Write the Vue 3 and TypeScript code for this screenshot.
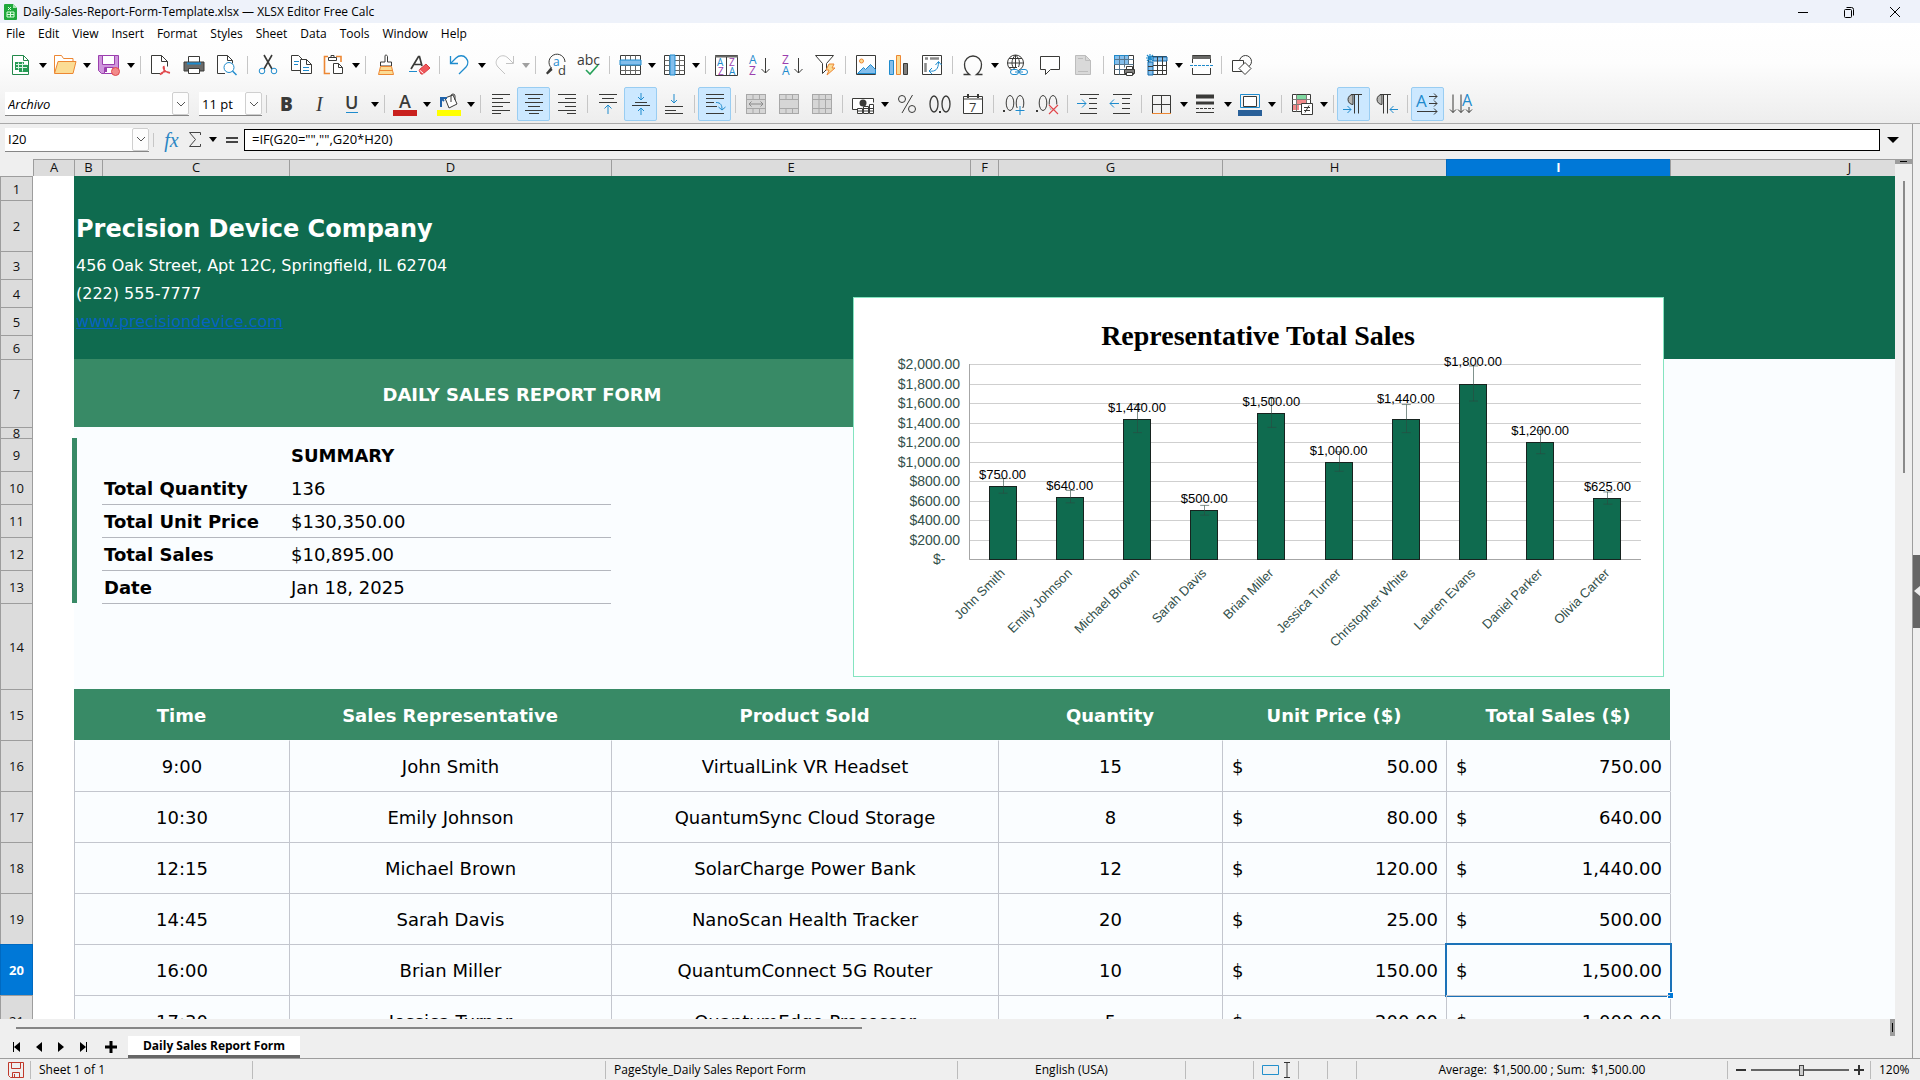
<script setup lang="ts">
import { ref } from 'vue'

interface Tool {
  id: string
  label: string
  menu?: boolean
  active?: boolean
  disabled?: boolean
}

const K = '#3a3a38'
const B = '#1e8bcd'
const P = '#9b3fae'
const O = '#ed8733'
const G = '#a8a8a8'

const lines = (rows: number[][], color = K) =>
  rows.map(([x, y, w]) => `<path d="M${x} ${y}.5h${w}" stroke="${color}"/>`).join('')

const mergeBase = `<rect x="2.500" y="2.500" width="19" height="19" fill="#d6d6d6" stroke="${G}"/><path d="M2.500 7.500h19M2.500 16.500h19M9 2.500v5M15.500 2.500v5M9 16.500v5M15.500 16.500v5" stroke="${G}"/>`
const down = (x: number, y1: number, y2: number, c = K, s = 4) =>
  `<path d="M${x} ${y1}V${y2}M${x - s} ${y2 - s}l${s} ${s} ${s}-${s}" stroke="${c}"/>`
const letter = (x: number, y: number, size: number, text: string, fill = K, extra = '') =>
  `<text x="${x}" y="${y}" font-size="${size}" fill="${fill}" stroke="none" font-family="'Open Sans', sans-serif" ${extra}>${text}</text>`

const icons: Record<string, string> = {
  new: `<path d="M3.500 2.500h11l5 5v14h-16z" fill="#fff" stroke="#23894b"/><path d="M14.500 2.500v5h5" stroke="#23894b"/><path d="M6 9h9v3h4v7H10v-2H6z" fill="#259c54"/><path d="M7 11.500h11M7 14.500h11M9.500 9.500v7M13.500 9.500v9" stroke="#d9f2e3"/>`,
  open: `<path d="M1.500 20V2.500h7l2 3h9.500v4" stroke="${O}" fill="#fff"/><path d="M1.500 20.500L5 8.500h18l-3 12z" fill="#fbdc95" stroke="${O}"/>`,
  save: `<path d="M1.500 2.500h20v18h-17l-3-3z" fill="#cf96dc" stroke="${P}"/><path d="M5.500 2.500h12v9h-12z" fill="#fff" stroke="${P}"/><path d="M7.500 14.500h9v6h-9z" fill="#fff" stroke="${P}"/><path d="M9 15v4" stroke="${P}" stroke-width="2"/><circle cx="18.500" cy="18.500" r="4" fill="#f28a8a" stroke="#e0484c"/>`,
  pdf: `<path d="M11 20.500H2.500v-18h10l6 6v5" stroke="${K}" fill="#fff"/><path d="M12.500 2.500v6h6" stroke="${K}"/><path d="M11 21.500c4-1 5-5 4-8-2 0 0 6 6 6.500M11 21.500c2-3 6-3.500 10-2" stroke="#e0484c" stroke-width="1.300"/>`,
  print: `<path d="M6.500 10V3.500h11V10" fill="#fff" stroke="${K}"/><path d="M2 9h20v9H2z" fill="#6b6b69" stroke="${K}"/><path d="M5 9.500h14v2H5z" fill="${B}"/><path d="M6.500 15.500h11v5h-11z" fill="#fff" stroke="${K}"/>`,
  preview: `<path d="M10 20.500H2.500v-18h10l5 5v3" stroke="${K}" fill="#fff"/><path d="M12.500 2.500v5h5" stroke="${K}"/><circle cx="14" cy="14.500" r="5" fill="#fff" stroke="${B}"/><path d="M17.500 18l4 4" stroke="${B}" stroke-width="1.500"/>`,
  cut: `<path d="M8 2l8 14M16 2L8 16" stroke="${K}" stroke-width="1.600"/><circle cx="6" cy="18" r="2.800" stroke="${B}"/><circle cx="18" cy="18" r="2.800" stroke="${B}"/>`,
  copy: `<path d="M11 17.500H2.500v-15h7l4 4" fill="#fff" stroke="${K}"/><path d="M5 8.500h5M5 11.500h4" stroke="${B}"/><path d="M11.500 6.500h6l5 5v9h-11z" fill="#fff" stroke="${K}"/><path d="M17.500 6.500v5h5" stroke="${K}"/><path d="M14 14.500h6M14 17.500h6" stroke="${B}"/>`,
  paste: `<path d="M8 20.500H2.500v-17H6M14 3.500h5V9" stroke="${O}" stroke-width="1.600"/><path d="M6.500 4.500h8v3h-8zM9 4.500v-2h3v2" fill="#fff" stroke="${K}"/><path d="M11.500 10.500h5l4 4v6h-9z" fill="#fff" stroke="${K}"/><path d="M16.500 10.500v4h4" stroke="${K}"/>`,
  brush: `<path d="M11 2.500a1.500 1.500 0 0 1 2.500 1V9H17.500v4h-11V9H11z" fill="#fff" stroke="${K}"/><path d="M6.500 13.500h11l2 8h-15z" fill="#fbdc95" stroke="${O}"/><path d="M6 17.500h12" stroke="${O}"/>`,
  clear: `<path d="M4 16L11.500 3.500h1L15 13M7 11.500h7" stroke="${K}" stroke-width="1.700"/><path d="M2 18.500h8" stroke="${B}"/><path d="M12 17l7-6 4 4-7 6h-2z" fill="#f0585c" stroke="#d8383d"/><path d="M12.500 17l4 3.500" stroke="#fff"/>`,
  undo: `<path d="M2.500 3v7.500H10" stroke="${B}" stroke-width="1.300"/><path d="M3 10l5-5c3-3 7.500-3 10 0s2.500 6 0 9l-7 7" stroke="${B}" stroke-width="1.300"/>`,
  redo: `<path d="M21.500 3v7.500H14" stroke="#c3c3c3"/><path d="M21 10l-5-5c-3-3-7.500-3-10 0s-2.500 6 0 9l7 7" stroke="#c3c3c3"/>`,
  find: `<path d="M7.500 15A8 8 0 1 1 21 9" stroke="${K}"/><path d="M7 14l-5 6 1.500 1.500L8.500 17z" fill="${K}"/>${letter(9, 13, 12, 'a', B)}${letter(14, 22, 13, 'd')}`,
  spell: `${letter(0, 12, 14, 'abc')}<path d="M9 17l4 4 8-9" stroke="#27a15a" stroke-width="1.600"/>`,
  row: `<path d="M2.500 2.500h20v19h-20z" fill="#fff" stroke="${K}"/><path d="M2.500 17.500h20M7.500 2.500v19M12.500 2.500v19M17.500 2.500v19M2.500 12.500h20" stroke="#686866"/><path d="M2 7h21v5H2z" fill="#83beec" stroke="${B}"/>`,
  col: `<path d="M2.500 2.500h20v19h-20z" fill="#fff" stroke="${K}"/><path d="M2.500 7.500h20M2.500 12.500h20M2.500 17.500h20M7.500 2.500v19M17.500 2.500v19" stroke="#686866"/><path d="M8 2h5v20H8z" fill="#83beec" stroke="${B}"/>`,
  sort: `<path d="M1.500 2.500h22v20h-22z" fill="#fff" stroke="${K}"/><path d="M1 3.500h23" stroke="#686866" stroke-width="2"/><path d="M12.500 4v18" stroke="${K}"/>${letter(3, 13, 10, 'A', B)}${letter(15, 13, 10, 'Z', P)}${letter(4, 22, 10, 'Z', P)}${letter(15, 22, 10, 'A', B)}`,
  asc: `${letter(2, 11, 12, 'A', B)}${letter(2, 22, 12, 'Z', P)}${down(18.5, 5, 20)}`,
  desc: `${letter(2, 11, 12, 'Z', P)}${letter(2, 22, 12, 'A', B)}${down(18.5, 5, 20)}`,
  filter: `<path d="M2.500 2.500h18l-7 8v6l-4 4v-10z" fill="#fff" stroke="${K}"/><path d="M16 11h5l-2 4h3l-8 7 2-5h-3z" fill="#fbdc95" stroke="${O}"/>`,
  image: `<path d="M2.500 2.500h19v19h-19z" fill="#fff" stroke="${K}"/><circle cx="7.500" cy="8" r="2" fill="#fbdc95" stroke="${O}"/><path d="M3.500 20.500l6-6 2 2 5-5 5 5v4z" fill="#83beec" stroke="${B}"/>`,
  chart: `<path d="M2.500 7.500h4v14h-4z" fill="#83beec" stroke="${B}"/><path d="M9.500 2.500h4v19h-4z" fill="#fbdc95" stroke="${O}"/><path d="M16.500 10.500h4v11h-4z" fill="#807f7d" stroke="${K}"/>`,
  pivot: `<path d="M2.500 2.500h19v19h-19z" fill="#fff" stroke="${K}"/><path d="M5 5.500h3M10 5.500h9M5.500 10v9" stroke="#888" stroke-width="2.500"/><path d="M9.500 18c6 1 9-2 9-9M12 15l-3 3 3 3M15.500 12l3-3.500 3 3.500" stroke="${B}"/>`,
  omega: `<path d="M2.500 21.500h6c-4-3-5-6-5-10a8.500 8.500 0 0 1 17 0c0 4-1 7-5 10h6" stroke="${K}" stroke-width="1.300"/>`,
  link: `<circle cx="10.500" cy="10" r="8" fill="#fff" stroke="${K}"/><path d="M2.500 10h16M4 5.500h13M4 14.500h8M10.500 2v13M10.500 2c-4.500 4-4.500 11-1 14M10.500 2c4.500 4 4.500 8 3 12" stroke="${K}"/><rect x="5.500" y="16.500" width="8" height="5" rx="2.500" fill="#fff" stroke="${B}"/><rect x="14.500" y="16.500" width="8" height="5" rx="2.500" fill="#fff" stroke="${B}"/><path d="M10 19h8" stroke="${B}"/>`,
  comment: `<path d="M2.500 3.500h19v13h-9l-5 5v-5h-5z" fill="#fff" stroke="${K}"/>`,
  headfoot: `<path d="M4.500 2.500h10l5 5v14h-15z" fill="#d9d9d9" stroke="#bdbdbd"/><path d="M14.500 2.500v5h5M7 5.500h5M7 18.500h10" stroke="#bdbdbd"/>`,
  area: `<path d="M2.500 2.500h19v19h-19z" fill="#fff" stroke="${K}"/><path d="M2.500 2.500h14v9h-14z" fill="#83beec" stroke="${B}"/><path d="M2.500 6.500h19M2.500 11.500h19M2.500 16.500h10M7.500 2.500v19M12.500 2.500v12M16.500 2.500v9" stroke="#55778f"/><path d="M12.500 16.500h10v4h-10z" fill="#807f7d" stroke="${K}"/><path d="M14.500 13.500h6v3h-6zM14.500 19.500h6v3h-6z" fill="#fff" stroke="${K}"/>`,
  freeze: `<path d="M3.500 3.500h18v18h-18z" fill="#fff" stroke="${K}"/><path d="M8 4h14v4H8zM3 9h5v13H3z" fill="#83beec" stroke="#0f66a8"/><path d="M8 12.500h14M8 17.500h14M12.500 4v18M17.500 4v18M3 13.500h5M3 17.500h5" stroke="${K}"/><path d="M5 1v8M1 5h8M2 2l6 6M8 2L2 8" stroke="${B}" stroke-width="1.200"/>`,
  split: `<path d="M3.500 10V2.500h18V10M3.500 15v6.500h18V15" fill="#fff" stroke="${K}"/><path d="M3 4.500h19" stroke="#686866" stroke-width="3"/><path d="M1 12.500h23" stroke="${B}" stroke-dasharray="3 1"/>`,
  shapes: `<circle cx="15.500" cy="8.500" r="6" stroke="${K}"/><path d="M2.500 7.500h11v11h-11z" fill="#fff" stroke="${K}"/><path d="M15 9.500l6 6-6 6-6-6z" fill="#fff" stroke="${K}"/>`,
  bold: letter(5, 19, 19, 'B', K, 'font-weight="800"'),
  italic: letter(8, 19, 20, 'I', K, `font-style="italic" style="font-family:'Liberation Serif',serif"`),
  underline: `${letter(4, 17, 18, 'U', K, 'font-weight="600"')}<path d="M5 20.500h12" stroke="${B}"/>`,
  fontcolor: `${letter(6, 16, 18, 'A', K, 'font-weight="600"')}<path d="M0 18h24v6H0z" fill="#c9211e"/>`,
  highlight: `<path d="M8 6l8-3 4 9-8 4zM14 10V4a2 2 0 0 1 4 0v4" fill="#fff" stroke="${K}"/><path d="M4 15V6h6M4 6l3 3" stroke="#1f62a8" stroke-width="2"/><path d="M0 18h24v6H0z" fill="#ff0"/>`,
  left: lines([[3, 2, 18], [3, 6, 11], [3, 10, 18], [3, 14, 11], [3, 18, 18], [3, 21, 9]]),
  center: lines([[3, 2, 18], [6, 6, 12], [3, 10, 18], [6, 14, 12], [3, 18, 18], [7, 21, 10]]),
  right: lines([[3, 2, 18], [10, 6, 11], [3, 10, 18], [10, 14, 11], [3, 18, 18], [12, 21, 9]]),
  top: `${lines([[3, 2, 18], [6, 6, 12], [3, 10, 18]])}<path d="M12 22V13M8.500 16.500L12 13l3.500 3.500" stroke="${B}"/>`,
  middle: `${lines([[6, 10, 12], [3, 13, 18]])}${down(12, 1, 8, B, 3)}<path d="M12 23v-7M9 19l3-3 3 3" stroke="${B}"/>`,
  bottom: `${down(12, 2, 11, B, 3)}${lines([[3, 14, 18], [3, 18, 11], [3, 21, 18]])}`,
  wrap: `${lines([[3, 2, 18], [3, 6, 18], [3, 10, 8], [3, 14, 11], [3, 21, 18]])}<path d="M13 10.500c5 0 6 3 6 7M15.500 15l3.500 3 3.500-3" stroke="${B}"/>`,
  merge: `${mergeBase}<path d="M5 12h14M7.500 9.500L5 12l2.500 2.500M16.500 9.500L19 12l-2.500 2.500" stroke="#8a8a8a"/>`,
  merge2: mergeBase,
  merge3: `${mergeBase}<path d="M9 7.500v9M15.500 7.500v9" stroke="${G}"/>`,
  currency: `<path d="M6 17.500H1.500v-11h21v4" fill="#fff" stroke="${K}"/><circle cx="12" cy="11" r="3.500" fill="${K}"/><path d="M6.500 16.500h5v5h-5zM12.500 14.500h5v7h-5zM18.500 12.500h4v9h-4z" fill="#fff" stroke="${K}"/><path d="M7 19h15M13 16.500h9" stroke="${K}"/>`,
  percent: `<circle cx="7" cy="7" r="3.500" stroke="${K}"/><circle cx="17" cy="17" r="3.500" stroke="${K}"/><path d="M17.500 3L7 21" stroke="${K}"/>`,
  number: `<ellipse cx="6" cy="12" rx="4" ry="8" stroke="${K}" stroke-width="1.300"/><ellipse cx="18" cy="12" rx="4" ry="8" stroke="${K}" stroke-width="1.300"/><path d="M11 19h2v2h-2z" fill="${K}"/>`,
  date: `<path d="M2.500 4.500h19v17h-19z" fill="#fff" stroke="${K}"/><path d="M2.500 7h19" stroke="${K}"/><path d="M7 2v4M17 2v4" stroke="${K}" stroke-width="2"/>${letter(8, 20, 13, '7')}`,
  adddec: `<path d="M1 18h2v2H1z" fill="${K}"/><ellipse cx="8" cy="11" rx="3.800" ry="7.500" stroke="${K}"/><ellipse cx="18" cy="11" rx="3.800" ry="7.500" stroke="${K}"/><path d="M18 13v10M13 18h10" stroke="#f5f5f5" stroke-width="4"/><path d="M18 14v9M13.500 18.500h9" stroke="${B}"/>`,
  deldec: `<path d="M1 18h2v2H1z" fill="${K}"/><ellipse cx="8" cy="11" rx="3.800" ry="7.500" stroke="${K}"/><ellipse cx="18" cy="11" rx="3.800" ry="7.500" stroke="${K}"/><path d="M14 13l9 9M23 13l-9 9" stroke="#f5f5f5" stroke-width="3"/><path d="M14 13l9 9M23 13l-9 9" stroke="#e0484c" stroke-width="1.200"/>`,
  indent: `${lines([[4, 2, 19], [13, 6, 8], [13, 11, 8], [13, 16, 8], [4, 21, 17]])}<path d="M1 11.500h9M6 7.500l4 4-4 4" stroke="${B}"/>`,
  outdent: `${lines([[4, 2, 19], [13, 6, 8], [13, 11, 8], [13, 16, 8], [4, 21, 17]])}<path d="M10 11.500H1M5 7.500l-4 4 4 4" stroke="${B}"/>`,
  borders: `<path d="M2.500 21.500v-18h18v18M11.500 3.500v18M2.500 12.500h18" stroke="${K}"/><path d="M2 21.500h19" stroke="${O}"/>`,
  linestyle: `<path d="M2 4.500h18" stroke="${K}" stroke-width="4"/><path d="M2 11h18" stroke="${K}" stroke-width="3"/><path d="M2 16.500h18" stroke="${K}" stroke-dasharray="3 1"/><path d="M2 20.500h18" stroke="${K}"/>`,
  linecolor: `<path d="M2.500 2.500h19v13h-19z" stroke="${B}"/><path d="M5.500 4.500h13v10h-13z" fill="#fff" stroke="${K}"/><path d="M0 18h24v6H0z" fill="#2a6099"/>`,
  conditional: `<path d="M2.500 2.500h18v17h-18z" fill="#fff" stroke="${K}"/><path d="M7 3h9v4H7z" fill="#7fd8a0"/><path d="M7 8h9v4H7zM3 12h6v6H3z" fill="#f28a8a"/><path d="M2.500 7.500h18M2.500 12.500h18M6.500 2.500v17M16.500 2.500v17" stroke="#7d7b78"/><path d="M11.500 11.500h11v11h-11z" fill="#fff" stroke="${K}"/><path d="M14 15.500h6M14 18.500h6M19 13.500l-4 7" stroke="${K}"/>`,
  ltr: `<path d="M11 12.500a5 5 0 0 1 0-10z" fill="#b5b5b3" stroke="${K}"/><path d="M9 2.500h11M12.500 2.500v19M16.500 2.500v19" stroke="${K}"/><path d="M1 17.500h8M5.500 14l3.500 3.500-3.500 3.500" stroke="${B}"/>`,
  rtl: `<path d="M7 12.500a5 5 0 0 1 0-10z" fill="#b5b5b3" stroke="${K}"/><path d="M5 2.500h11M8.500 2.500v19M12.500 2.500v19" stroke="${K}"/><path d="M23 17.500h-8M18.500 14L15 17.500l3.500 3.500" stroke="${B}"/>`,
  horizontal: `${letter(0, 15, 17, 'A', B)}<path d="M13 4.500h8M18 1.500l3 3-3 3M13 11.500h8M18 8.500l3 3-3 3M1 19.500h20M18 16.500l3 3-3 3" stroke="${K}"/>`,
  vertical: `${letter(13, 14, 16, 'A', B)}<path d="M4 2.500v18M1 17.500l3 3 3-3M12 2.500v18M9 17.500l3 3 3-3M20 15v5.500M17 17.500l3 3 3-3" stroke="${K}"/>`,
}

const standardBar: Tool[][] = [
  [{ id: 'new', label: 'New', menu: true }, { id: 'open', label: 'Open', menu: true }, { id: 'save', label: 'Save', menu: true }],
  [{ id: 'pdf', label: 'Export as PDF' }, { id: 'print', label: 'Print' }, { id: 'preview', label: 'Print Preview' }],
  [{ id: 'cut', label: 'Cut' }, { id: 'copy', label: 'Copy' }, { id: 'paste', label: 'Paste', menu: true }],
  [{ id: 'brush', label: 'Clone Formatting' }, { id: 'clear', label: 'Clear Formatting' }],
  [{ id: 'undo', label: 'Undo', menu: true }, { id: 'redo', label: 'Redo', menu: true, disabled: true }],
  [{ id: 'find', label: 'Find and Replace' }, { id: 'spell', label: 'Spelling' }],
  [{ id: 'row', label: 'Row', menu: true }, { id: 'col', label: 'Column', menu: true }],
  [{ id: 'sort', label: 'Sort' }, { id: 'asc', label: 'Sort Ascending' }, { id: 'desc', label: 'Sort Descending' }, { id: 'filter', label: 'AutoFilter' }],
  [{ id: 'image', label: 'Insert Image' }, { id: 'chart', label: 'Insert Chart' }, { id: 'pivot', label: 'Pivot Table' }],
  [{ id: 'omega', label: 'Special Character', menu: true }, { id: 'link', label: 'Hyperlink' }, { id: 'comment', label: 'Comment' }, { id: 'headfoot', label: 'Headers and Footers', disabled: true }],
  [{ id: 'area', label: 'Define Print Area' }, { id: 'freeze', label: 'Freeze Rows and Columns', menu: true }, { id: 'split', label: 'Split Window' }],
  [{ id: 'shapes', label: 'Draw Functions' }],
]

const formatBar: Tool[][] = [
  [{ id: 'bold', label: 'Bold' }, { id: 'italic', label: 'Italic' }, { id: 'underline', label: 'Underline', menu: true }],
  [{ id: 'fontcolor', label: 'Font Color', menu: true }, { id: 'highlight', label: 'Background Color', menu: true }],
  [{ id: 'left', label: 'Align Left' }, { id: 'center', label: 'Center Horizontally', active: true }, { id: 'right', label: 'Align Right' }],
  [{ id: 'top', label: 'Align Top' }, { id: 'middle', label: 'Center Vertically', active: true }, { id: 'bottom', label: 'Align Bottom' }],
  [{ id: 'wrap', label: 'Wrap Text', active: true }],
  [{ id: 'merge', label: 'Merge and Center', disabled: true }, { id: 'merge2', label: 'Merge Cells', disabled: true }, { id: 'merge3', label: 'Unmerge Cells', disabled: true }],
  [{ id: 'currency', label: 'Currency', menu: true }, { id: 'percent', label: 'Percent' }, { id: 'number', label: 'Number' }, { id: 'date', label: 'Date' }],
  [{ id: 'adddec', label: 'Add Decimal Place' }, { id: 'deldec', label: 'Delete Decimal Place' }],
  [{ id: 'indent', label: 'Increase Indent' }, { id: 'outdent', label: 'Decrease Indent' }],
  [{ id: 'borders', label: 'Borders', menu: true }, { id: 'linestyle', label: 'Border Style', menu: true }, { id: 'linecolor', label: 'Border Color', menu: true }],
  [{ id: 'conditional', label: 'Conditional Formatting', menu: true }],
  [{ id: 'ltr', label: 'Left-to-Right', active: true }, { id: 'rtl', label: 'Right-to-Left' }],
  [{ id: 'horizontal', label: 'Text Left to Right', active: true }, { id: 'vertical', label: 'Text Top to Bottom' }],
]

const menus = ['File', 'Edit', 'View', 'Insert', 'Format', 'Styles', 'Sheet', 'Data', 'Tools', 'Window', 'Help']
const columns = ['A', 'B', 'C', 'D', 'E', 'F', 'G', 'H', 'I', 'J']

const summary = [
  { row: 10, label: 'Total Quantity', value: '136' },
  { row: 11, label: 'Total Unit Price', value: '$130,350.00' },
  { row: 12, label: 'Total Sales', value: '$10,895.00' },
  { row: 13, label: 'Date', value: 'Jan 18, 2025' },
]

const sales = [
  { row: 16, time: '9:00', rep: 'John Smith', product: 'VirtualLink VR Headset', qty: 15, price: '50.00', total: '750.00' },
  { row: 17, time: '10:30', rep: 'Emily Johnson', product: 'QuantumSync Cloud Storage', qty: 8, price: '80.00', total: '640.00' },
  { row: 18, time: '12:15', rep: 'Michael Brown', product: 'SolarCharge Power Bank', qty: 12, price: '120.00', total: '1,440.00' },
  { row: 19, time: '14:45', rep: 'Sarah Davis', product: 'NanoScan Health Tracker', qty: 20, price: '25.00', total: '500.00' },
  { row: 20, time: '16:00', rep: 'Brian Miller', product: 'QuantumConnect 5G Router', qty: 10, price: '150.00', total: '1,500.00' },
  { row: 21, time: '17:30', rep: 'Jessica Turner', product: 'QuantumEdge Processor', qty: 5, price: '200.00', total: '1,000.00' },
]

const plot = { left: 116, right: 788, top: 67, bottom: 262, max: 2000 }
const yOf = (v: number) => plot.bottom - (v / plot.max) * (plot.bottom - plot.top)
const money = (v: number) => '$' + v.toLocaleString('en-US', { minimumFractionDigits: 2 })
const ticks = Array.from({ length: 11 }, (_, i) => 2000 - i * 200)

const people: [string, number, number][] = [
  ['John Smith', 750, 7],
  ['Emily Johnson', 640, 7],
  ['Michael Brown', 1440, 7],
  ['Sarah Davis', 500, 7],
  ['Brian Miller', 1500, 7],
  ['Jessica Turner', 1000, 7],
  ['Christopher White', 1440, 16],
  ['Lauren Evans', 1800, 18],
  ['Daniel Parker', 1200, 7],
  ['Olivia Carter', 625, 7],
]
const step = (plot.right - plot.left) / people.length
const bars = people.map(([name, value, lift], i) => ({
  name,
  value,
  x: plot.left + step * (i + 0.5),
  y: yOf(value),
  labelY: yOf(value) - lift,
  high: yOf(value * 1.1),
  low: yOf(value * 0.9),
}))

const cellName = ref('I20')
const formula = ref('=IF(G20="","",G20*H20)')
const zoom = ref(52)
</script>

<template>
  <div class="app">
    <header class="titlebar">
      <svg class="logo" viewBox="0 0 13 16" aria-hidden="true">
        <path d="M1 0h8l4 4v11a1 1 0 0 1-1 1H1a1 1 0 0 1-1-1V1a1 1 0 0 1 1-1z" fill="#1fa83c" />
        <path d="M9 0l4 4H9z" fill="#a9e5b4" />
        <path d="M3 8h7v5H3zM3 10.500h7M6.500 8v5M4 3l3 3M7 3L4 6" fill="none" stroke="#d9ffdf" />
      </svg>
      <h1>Daily-Sales-Report-Form-Template.xlsx — XLSX Editor Free Calc</h1>
      <div class="window-buttons">
        <button aria-label="Minimize"><svg viewBox="0 0 12 12"><path d="M1 6.500h10" /></svg></button>
        <button aria-label="Restore"><svg viewBox="0 0 12 12"><rect x="1.500" y="3.500" width="7" height="8" rx="1" /><path d="M3.500 1.500h5a2 2 0 0 1 2 2v6" /></svg></button>
        <button aria-label="Close"><svg viewBox="0 0 12 12"><path d="M1 1l10 10M11 1L1 11" /></svg></button>
      </div>
    </header>

    <div class="chrome">
      <nav class="menubar" aria-label="Main menu">
        <button v-for="m in menus" :key="m">{{ m }}</button>
      </nav>

      <div class="toolbar standard" role="toolbar" aria-label="Standard">
        <div v-for="(group, g) in standardBar" :key="g" class="group">
          <template v-for="t in group" :key="t.id">
            <button class="tool" :class="{ active: t.active }" :disabled="t.disabled" :aria-label="t.label">
              <svg viewBox="0 0 24 24" v-html="icons[t.id]"></svg>
            </button>
            <button v-if="t.menu" class="drop" :disabled="t.disabled" :aria-label="t.label + ' options'"></button>
          </template>
        </div>
      </div>

      <div class="toolbar formatting" role="toolbar" aria-label="Formatting">
        <div class="combo font-name">
          <select aria-label="Font Name"><option>Archivo</option></select>
          <span class="chevron"><svg viewBox="0 0 10 6"><path d="M1 1l4 4 4-4" /></svg></span>
        </div>
        <div class="combo font-size">
          <select aria-label="Font Size"><option>11 pt</option></select>
          <span class="chevron"><svg viewBox="0 0 10 6"><path d="M1 1l4 4 4-4" /></svg></span>
        </div>
        <span class="gap-rule"></span>
        <div v-for="(group, g) in formatBar" :key="g" class="group">
          <template v-for="t in group" :key="t.id">
            <button class="tool" :class="{ active: t.active }" :disabled="t.disabled" :aria-label="t.label">
              <svg viewBox="0 0 24 24" v-html="icons[t.id]"></svg>
            </button>
            <button v-if="t.menu" class="drop" :aria-label="t.label + ' options'"></button>
          </template>
        </div>
      </div>
    </div>

    <div class="workspace">
      <main class="document">
        <div class="formula-bar">
          <div class="combo name-box">
            <input v-model="cellName" aria-label="Name Box" />
            <button class="chevron" aria-label="Name Box list"><svg viewBox="0 0 10 6"><path d="M1 1l4 4 4-4" /></svg></button>
          </div>
          <span class="fx-rule"></span>
          <button class="fx" aria-label="Function Wizard">fx</button>
          <button class="sigma" aria-label="Select Function"><svg viewBox="0 0 14 18"><path d="M12.500 4V1.500h-11l6 7-6 7h11V13" /></svg></button>
          <button class="drop" aria-label="Function options"></button>
          <button class="equals" aria-label="Formula"></button>
          <input v-model="formula" class="formula" aria-label="Input line" />
          <button class="expand" aria-label="Expand Formula Bar"></button>
        </div>

        <div class="grid-area">
          <div class="sheet">
            <table>
              <colgroup>
                <col class="w-head" /><col class="w-a" /><col class="w-b" /><col class="w-c" /><col class="w-d" />
                <col class="w-e" /><col class="w-f" /><col class="w-g" /><col class="w-h" /><col class="w-i" /><col class="w-j" />
              </colgroup>
              <thead>
                <tr>
                  <th class="corner"></th>
                  <th v-for="c in columns" :key="c" scope="col" class="col-head" :class="{ current: c === 'I' }">{{ c }}</th>
                </tr>
              </thead>
              <tbody>
                <tr class="h-24"><th scope="row">1</th><td class="margin"></td><td colspan="9" class="banner"></td></tr>
                <tr class="h-51"><th scope="row">2</th><td class="margin"></td><td colspan="9" class="banner company">Precision Device Company</td></tr>
                <tr class="h-28"><th scope="row">3</th><td class="margin"></td><td colspan="9" class="banner contact">456 Oak Street, Apt 12C, Springfield, IL 62704</td></tr>
                <tr class="h-28"><th scope="row">4</th><td class="margin"></td><td colspan="9" class="banner contact">(222) 555-7777</td></tr>
                <tr class="h-28"><th scope="row">5</th><td class="margin"></td><td colspan="9" class="banner contact"><a href="#">www.precisiondevice.com</a></td></tr>
                <tr class="h-24"><th scope="row">6</th><td class="margin"></td><td colspan="9" class="banner"></td></tr>
                <tr class="h-68"><th scope="row">7</th><td class="margin"></td><td colspan="4" class="form-title">DAILY SALES REPORT FORM</td><td colspan="5"></td></tr>
                <tr class="h-11"><th scope="row">8</th><td class="margin"></td><td colspan="9"></td></tr>
                <tr class="h-33"><th scope="row">9</th><td class="margin bar-left"></td><td class="bar-right"></td><td></td><td class="bold value">SUMMARY</td><td colspan="6"></td></tr>
                <tr v-for="s in summary" :key="s.row" class="h-33">
                  <th scope="row">{{ s.row }}</th><td class="margin bar-left"></td><td class="bar-right"></td>
                  <td class="bold value" :class="{ ruled: s.row > 10 }">{{ s.label }}</td><td class="value" :class="{ ruled: s.row > 10 }">{{ s.value }}</td><td colspan="6"></td>
                </tr>
                <tr class="h-86"><th scope="row">14</th><td class="margin"></td><td></td><td colspan="2" class="ruled"></td><td colspan="6"></td></tr>
                <tr class="h-51 headings">
                  <th scope="row">15</th><td class="margin"></td><td colspan="2">Time</td><td>Sales Representative</td><td colspan="2">Product Sold</td><td>Quantity</td><td>Unit Price ($)</td><td>Total Sales ($)</td><td class="outside"></td>
                </tr>
                <tr v-for="s in sales" :key="s.row" class="h-51 entry" :class="{ first: s.row === 16 }">
                  <th scope="row" :class="{ current: s.row === 20 }">{{ s.row }}</th><td class="margin"></td>
                  <td colspan="2">{{ s.time }}</td><td>{{ s.rep }}</td><td colspan="2">{{ s.product }}</td><td>{{ s.qty }}</td>
                  <td><div class="amount"><span>$</span><span>{{ s.price }}</span></div></td>
                  <td class="total"><div class="amount"><span>$</span><span>{{ s.total }}</span></div><div v-if="s.row === 20" class="cursor"></div></td>
                  <td class="outside"></td>
                </tr>
              </tbody>
            </table>

            <figure class="chart">
              <svg viewBox="0 0 811 380" role="img" aria-label="Representative Total Sales">
                <text class="chart-title" x="405" y="48">Representative Total Sales</text>
                <g v-for="t in ticks" :key="t">
                  <line class="grid-line" :x1="plot.left" :x2="plot.right" :y1="Math.round(yOf(t)) + 0.5" :y2="Math.round(yOf(t)) + 0.5" />
                  <text v-if="t" class="tick" x="107" :y="yOf(t) + 5">{{ money(t) }}</text>
                  <text v-else class="tick zero" x="80" :y="yOf(t) + 5">$-</text>
                </g>
                <path class="axis" d="M116.500 67V262.500H788" />
                <g v-for="b in bars" :key="b.name">
                  <rect class="bar" :x="Math.round(b.x) - 13.5" :y="Math.round(b.y) + 0.5" width="27" :height="plot.bottom - Math.round(b.y)" />
                  <path class="error" :d="`M${Math.round(b.x) + 0.5} ${b.high}V${b.low}M${b.x - 4} ${b.high}h9M${b.x - 4} ${b.low}h9`" />
                  <text class="data-label" :x="b.x" :y="b.labelY">{{ money(b.value) }}</text>
                  <text class="category" :transform="`translate(${b.x + 3} 277) rotate(-45)`">{{ b.name }}</text>
                </g>
              </svg>
            </figure>
          </div>
          <div class="v-scroll"><span class="v-split"></span><span class="v-thumb"></span></div>
        </div>

        <div class="h-scroll"><span class="h-thumb"></span><span class="h-split"></span></div>

        <div class="tabs">
          <button aria-label="First sheet"><svg viewBox="0 0 12 12"><path d="M2.500 1v10" stroke="#000" /><path d="M9 1v10L3 6z" /></svg></button>
          <button aria-label="Previous sheet"><svg viewBox="0 0 12 12"><path d="M9 1v10L3 6z" /></svg></button>
          <button aria-label="Next sheet"><svg viewBox="0 0 12 12"><path d="M3 1v10l6-5z" /></svg></button>
          <button aria-label="Last sheet"><svg viewBox="0 0 12 12"><path d="M9.500 1v10" stroke="#000" /><path d="M3 1v10l6-5z" /></svg></button>
          <button class="add" aria-label="Add sheet"><svg viewBox="0 0 14 14"><path d="M7 1v12M1 7h12" stroke="#000" stroke-width="3" /></svg></button>
          <button class="tab">Daily Sales Report Form</button>
        </div>
      </main>
      <aside class="sidebar"><button aria-label="Show sidebar"><svg viewBox="0 0 6 10"><path d="M6 0v10L0 5z" fill="#eee" /></svg></button></aside>
    </div>

    <footer class="status">
      <div class="disk">
        <svg viewBox="0 0 16 16"><path d="M.5.5h15v15h-13l-2-2zM3.500.5v6h9v-6M4.500 15.500v-5h7v5M6.500 12v3" fill="none" stroke="#c0392b" /></svg>
      </div>
      <div class="sheet-count">Sheet 1 of 1</div>
      <div></div>
      <div class="page-style">PageStyle_Daily Sales Report Form</div>
      <div class="centered">English (USA)</div>
      <div></div>
      <div class="insert-mode">
        <svg viewBox="0 0 30 18"><path d="M.5 4.500h16v9H.5z" fill="none" stroke="#2490cc" /><path d="M22 1.500h6M25 1.500v15M22 16.500h6" fill="none" stroke="#333" /></svg>
      </div>
      <div></div>
      <div></div>
      <div class="centered totals">Average:&nbsp; $1,500.00 ; Sum:&nbsp; $1,500.00</div>
      <div class="zoom">
        <button aria-label="Zoom out"><svg viewBox="0 0 10 10"><path d="M0 5h10" stroke="#333" stroke-width="2" /></svg></button>
        <input v-model="zoom" type="range" min="0" max="100" aria-label="Zoom" />
        <button aria-label="Zoom in"><svg viewBox="0 0 10 10"><path d="M0 5h10M5 0v10" stroke="#333" stroke-width="2" /></svg></button>
      </div>
      <div class="percent">120%</div>
    </footer>
  </div>
</template>

<style>
body {
  margin: 0;
  overflow: hidden;
}
</style>

<style scoped>
.app {
  display: flex;
  flex-direction: column;
  height: 100vh;
  overflow: hidden;
  background: #efefef;
  color: #000;
  font: 13px/18px 'Open Sans', 'Noto Sans', sans-serif;
}
button,
input,
select {
  margin: 0;
  padding: 0;
  border: 0;
  background: none;
  color: inherit;
  font: inherit;
}
svg {
  display: block;
}

.titlebar {
  display: flex;
  align-items: center;
  height: 23px;
  padding-left: 4px;
  background: #eef2fa;
}
.logo {
  width: 13px;
  height: 16px;
}
h1 {
  margin: 0 0 0 6px;
  font-size: 12px;
  font-weight: 400;
}
.window-buttons {
  display: flex;
  margin-left: auto;
  margin-right: 2px;
}
.window-buttons button {
  display: grid;
  place-items: center;
  width: 46px;
  height: 20px;
}
.window-buttons svg {
  width: 12px;
  height: 12px;
  fill: none;
  stroke: #000;
}

.chrome {
  border-bottom: 1px solid #a9a9a9;
  background: linear-gradient(#fff 0%, #fdfdfd 40%, #ededed 100%);
}
.menubar {
  display: flex;
  gap: 13px;
  box-sizing: border-box;
  height: 24px;
  padding: 0 0 2px 6px;
  font-size: 12px;
}
.toolbar {
  display: flex;
  align-items: center;
  box-sizing: border-box;
}
.standard {
  height: 36px;
  padding-left: 4px;
}
.formatting {
  height: 40px;
  padding: 2px 0 0 5px;
}
.group {
  display: flex;
  align-items: center;
}
.group + .group::before,
.gap-rule {
  content: '';
  width: 1px;
  height: 18px;
  margin: 0 3px 0 4px;
  background: #c6c6c6;
}
.tool {
  display: grid;
  place-items: center;
  box-sizing: border-box;
  width: 33px;
  height: 34px;
  border: 1px solid transparent;
  border-radius: 2px;
}
.tool.active {
  border-color: #99cdf2;
  background: #cce8ff;
}
.tool svg {
  width: 24px;
  height: 24px;
  fill: none;
  overflow: visible;
}
.drop {
  display: grid;
  place-items: center;
  width: 11px;
  height: 34px;
}
.drop::before,
.expand::before {
  content: '';
  border: 4px solid transparent;
  border-top: 5px solid #000;
  border-bottom: 0;
}
.drop:disabled::before {
  border-top-color: #a0a0a0;
}

.combo {
  display: grid;
  grid-template-columns: 1fr 17px;
  box-sizing: border-box;
  height: 24px;
  border-bottom: 1px solid #868686;
  background: #fff;
}
.combo select,
.combo input {
  grid-area: 1 / 1 / 2 / 3;
  min-width: 0;
  padding-left: 3px;
  appearance: none;
  outline: 0;
}
.chevron {
  grid-area: 1 / 2;
  display: grid;
  place-items: center;
  border: 1px solid #cfcfcf;
  border-radius: 2px;
  background: #fdfdfd;
  pointer-events: none;
}
.chevron svg {
  width: 10px;
  height: 6px;
  fill: none;
  stroke: #555;
}
.font-name {
  width: 184px;
  margin-right: 10px;
  font-style: italic;
}
.font-size {
  width: 63px;
}

.workspace {
  display: flex;
  flex: 1;
  min-height: 0;
}
.document {
  display: flex;
  flex: 1;
  flex-direction: column;
  min-width: 0;
}
.formula-bar {
  display: flex;
  align-items: center;
  height: 31px;
  padding: 0 0 4px 5px;
}
.name-box {
  width: 144px;
}
.fx-rule {
  width: 1px;
  height: 14px;
  margin: 0 9px 0 4px;
  background: #c6c6c6;
}
.fx {
  width: 17px;
  color: #2a86c4;
  font: italic 20px/20px 'Liberation Serif', serif;
}
.sigma {
  margin-left: 8px;
}
.sigma svg {
  width: 14px;
  height: 18px;
  fill: none;
  stroke: #444;
}
.formula-bar .drop {
  height: 20px;
  margin: 0 8px 0 5px;
}
.equals {
  width: 12px;
  height: 6px;
  border-top: 2px solid #444;
  border-bottom: 2px solid #444;
}
.formula {
  flex: 1;
  box-sizing: border-box;
  height: 22px;
  margin-left: 6px;
  padding: 0 7px 2px;
  border: 1px solid #000;
  background: #fff;
  outline: 0;
}
.expand {
  display: grid;
  place-items: center;
  width: 32px;
  height: 22px;
  padding-right: 7px;
}
.expand::before {
  border-width: 6px;
  border-bottom-width: 0;
}

.grid-area {
  display: flex;
  flex: 1;
  min-height: 0;
}
.sheet {
  position: relative;
  flex: 1;
  min-width: 0;
  overflow: hidden;
  background: #fafdff;
}
table {
  width: 2028px;
  border-spacing: 0;
  table-layout: fixed;
  font: 18px/22px 'DejaVu Sans', sans-serif;
}
.w-head { width: 33px; }
.w-a { width: 41px; }
.w-b { width: 28px; }
.w-c { width: 187px; }
.w-d { width: 322px; }
.w-e { width: 359px; }
.w-f { width: 28px; }
.w-g { width: 224px; }
.w-h { width: 224px; }
.w-i { width: 224px; }
.w-j { width: 358px; }
.h-11 { height: 11px; }
.h-24 { height: 24px; }
.h-28 { height: 28px; }
.h-33 { height: 33px; }
.h-51 { height: 51px; }
.h-68 { height: 68px; }
.h-86 { height: 86px; }
th,
td {
  box-sizing: border-box;
  padding: 0;
}
th {
  background: #dcdcdc;
  color: #111;
  font: 13px/10px 'Open Sans', sans-serif;
}
.col-head {
  height: 17px;
  padding-bottom: 2px;
  border-top: 1px solid #9d9d9d;
  border-left: 1px solid #9d9d9d;
}
.corner {
  background: #efefef;
}
tbody th {
  border-top: 1px solid #9d9d9d;
  border-right: 1px solid #9d9d9d;
  border-left: 1px solid #9d9d9d;
}
th.current {
  border-color: #0069c0;
  background: #0078d7;
  color: #fff;
  font-weight: 700;
}
td {
  padding-top: 2px;
  white-space: nowrap;
}
.margin {
  background: #fff;
}
.banner {
  padding-left: 2px;
  background: #0f6b4f;
  color: #fff;
}
.company {
  padding-top: 6px;
  font-size: 24px;
  font-weight: 700;
}
.contact {
  font-size: 16px;
}
.contact a {
  color: #0563c1;
}
.form-title {
  padding-top: 4px;
  background: #388a66;
  color: #fff;
  font-weight: 700;
  text-align: center;
}
.bar-left {
  border-right: 2px solid #388a66;
}
.bar-right {
  border-left: 3px solid #388a66;
}
.bold {
  font-weight: 700;
}
.value {
  padding-left: 2px;
}
.ruled {
  border-top: 1px solid #b4b7be;
}
.headings td {
  background: #388a66;
  color: #fff;
  font-weight: 700;
  text-align: center;
}
.headings .margin {
  background: #fff;
}
.headings .outside {
  background: none;
}
.entry td {
  border-top: 1px solid #c3c6ce;
  border-left: 1px solid #c3c6ce;
  text-align: center;
}
.entry.first td {
  border-top-color: transparent;
}
.entry td.margin {
  border-color: transparent;
}
.entry td.outside {
  border-top-color: transparent;
}
.amount {
  display: flex;
  justify-content: space-between;
  padding: 0 8px 0 9px;
}
.total {
  position: relative;
}
.cursor {
  position: absolute;
  inset: -2px -2px -2px -2px;
  border: 2px solid #1b72b8;
}
.cursor::after {
  content: '';
  position: absolute;
  right: -4px;
  bottom: -4px;
  width: 5px;
  height: 5px;
  border: 1px solid #fff;
  background: #0078d7;
}

.chart {
  position: absolute;
  top: 138px;
  left: 853px;
  box-sizing: border-box;
  width: 811px;
  height: 380px;
  margin: 0;
  background: #fff;
  box-shadow: inset 0 0 0 1px #84e4c0;
}
.chart text {
  fill: #33504a;
  font: 14px 'Liberation Sans', sans-serif;
}
.chart .chart-title {
  fill: #000;
  font: 700 28px 'Liberation Serif', serif;
  text-anchor: middle;
}
.tick,
.category {
  text-anchor: end;
}
.chart .category {
  font-size: 13px;
}
.chart .zero {
  text-anchor: start;
}
.chart .data-label {
  fill: #000;
  font-size: 13px;
  text-anchor: middle;
}
.grid-line {
  stroke: #cfcfcf;
}
.axis {
  fill: none;
  stroke: #a6a6a6;
}
.bar {
  fill: #0f6b4f;
  stroke: #17231f;
}
.error {
  fill: none;
  stroke: #2c4a41;
  stroke-opacity: 0.6;
}

.v-scroll {
  display: flex;
  flex-direction: column;
  align-items: center;
  width: 17px;
}
.v-split {
  align-self: stretch;
  height: 1px;
  border: 2px solid #9d9d9d;
  border-right-width: 5px;
  border-left-width: 5px;
  background: #000;
}
.v-thumb {
  width: 2px;
  height: 34%;
  margin-top: 17px;
  background: #8a8a8a;
}
.h-scroll {
  display: flex;
  align-items: center;
  justify-content: space-between;
  height: 17px;
  padding: 0 17px 0 16px;
}
.h-thumb {
  width: 45%;
  height: 2px;
  background: #858585;
}
.h-split {
  width: 1px;
  height: 9px;
  border: 4px solid #9d9d9d;
  border-right-width: 2px;
  border-left-width: 2px;
  background: #000;
}
.tabs {
  display: flex;
  align-items: center;
  height: 22px;
  padding-left: 6px;
}
.tabs button {
  display: grid;
  place-items: center;
  width: 22px;
  height: 22px;
}
.tabs svg {
  width: 12px;
  height: 12px;
}
.tabs .add {
  width: 34px;
}
.tabs .add svg {
  width: 14px;
  height: 14px;
}
.tabs .tab {
  box-sizing: border-box;
  width: 172px;
  border-bottom: 3px solid #666;
  background: #fff;
  font-size: 12px;
  font-weight: 700;
}
.sidebar {
  display: flex;
  align-items: center;
  width: 7px;
  border-left: 1px solid #9d9d9d;
}
.sidebar button {
  display: grid;
  place-items: center;
  width: 7px;
  height: 73px;
  background: #666;
}
.sidebar svg {
  width: 6px;
  height: 10px;
}

.status {
  display: grid;
  grid-template-columns: 31px 222px 353fr 352fr 228fr 68px 45px 29px 29px 371fr 143px 49px;
  align-items: center;
  height: 21px;
  border-top: 1px solid #9d9d9d;
  font-size: 12px;
}
.status > div {
  display: flex;
  align-items: center;
  box-sizing: border-box;
  height: 18px;
  padding: 1px 0 0 8px;
  border-right: 1px solid #bcbcbc;
  white-space: nowrap;
}
.status > div:last-child {
  border-right: 0;
}
.status .centered {
  justify-content: center;
  padding-left: 0;
}
.disk svg {
  width: 16px;
  height: 16px;
}
.insert-mode svg {
  width: 30px;
  height: 18px;
}
.status .zoom {
  gap: 5px;
  padding-right: 6px;
}
.zoom button svg {
  width: 10px;
  height: 10px;
}
.zoom input {
  flex: 1;
  min-width: 0;
  height: 12px;
  appearance: none;
  background: linear-gradient(#666, #666) center / 100% 2px no-repeat;
}
.zoom input::-webkit-slider-thumb {
  width: 5px;
  height: 11px;
  appearance: none;
  border: 1px solid #444;
  background: #ccc;
}
</style>
